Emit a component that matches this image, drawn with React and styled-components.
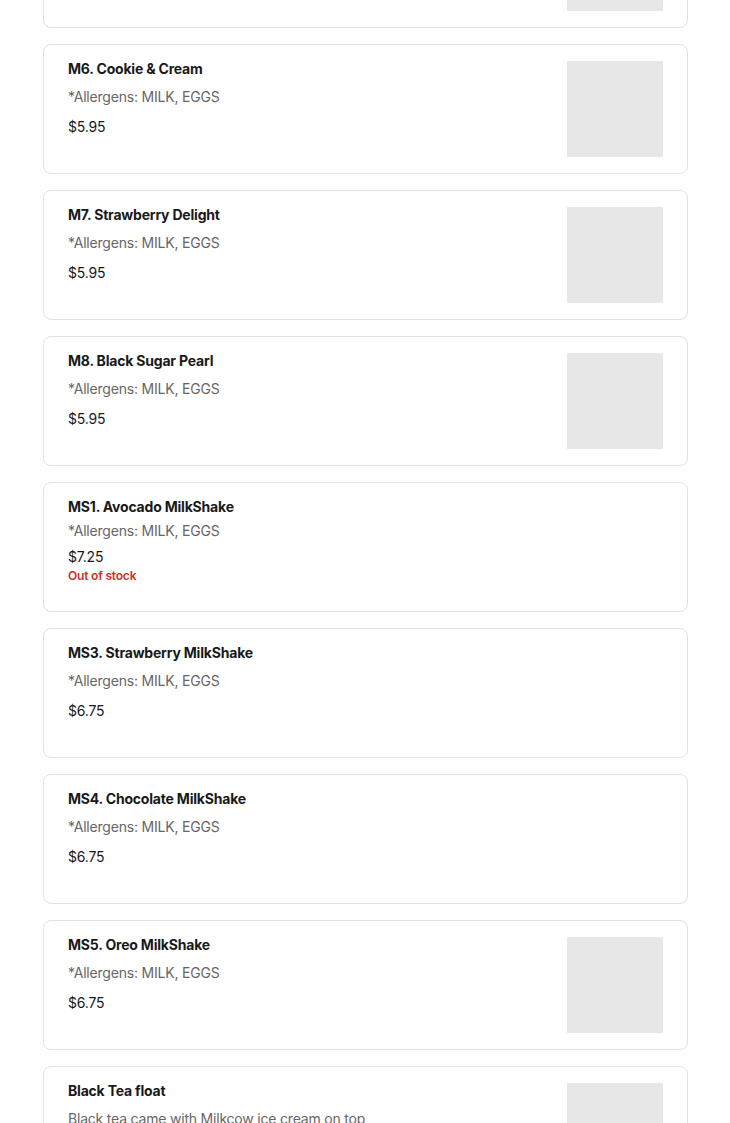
import React from "react";
import styled, { createGlobalStyle } from "styled-components";

const GlobalStyle = createGlobalStyle`
	html, body {
		margin: 0;
		padding: 0;
		background: #ffffff;
	}
	body {
		font-family: "Inter", "Liberation Sans", sans-serif;
		color: #191919;
		overflow: hidden;
	}
`;

const items = [
	{ name: "M5. Matcha Cream", desc: "*Allergens: MILK, EGGS", price: "$5.95", image: true },
	{ name: "M6. Cookie & Cream", desc: "*Allergens: MILK, EGGS", price: "$5.95", image: true },
	{ name: "M7. Strawberry Delight", desc: "*Allergens: MILK, EGGS", price: "$5.95", image: true },
	{ name: "M8. Black Sugar Pearl", desc: "*Allergens: MILK, EGGS", price: "$5.95", image: true },
	{ name: "MS1. Avocado MilkShake", desc: "*Allergens: MILK, EGGS", price: "$7.25", outOfStock: true },
	{ name: "MS3. Strawberry MilkShake", desc: "*Allergens: MILK, EGGS", price: "$6.75" },
	{ name: "MS4. Chocolate MilkShake", desc: "*Allergens: MILK, EGGS", price: "$6.75" },
	{ name: "MS5. Oreo MilkShake", desc: "*Allergens: MILK, EGGS", price: "$6.75", image: true },
	{ name: "Black Tea float", desc: "Black tea came with Milkcow ice cream on top", price: "$6.50", image: true },
];

const App = () => {
	return (
		<>
			<GlobalStyle />
			<MenuList>
				{items.map((item) => (
					<Card key={item.name}>
						<Info $compact={item.outOfStock}>
							<Title>{item.name}</Title>
							<Desc>{item.desc}</Desc>
							<Price>{item.price}</Price>
							{item.outOfStock && <Stock>Out of stock</Stock>}
						</Info>
						{item.image && <Thumb />}
					</Card>
				))}
			</MenuList>
		</>
	);
};

// list is scrolled: first card sits partly above the top edge
const MenuList = styled.main`
	display: flex;
	flex-direction: column;
	gap: 16px;
	width: 645px;
	margin: -102px 0 0 43px;
`;

const Card = styled.article`
	display: flex;
	justify-content: space-between;
	align-items: flex-start;
	min-height: 96px;
	padding: 16px 24px;
	border: 1px solid #e2e2e2;
	border-radius: 8px;
`;

const Info = styled.div`
	display: flex;
	flex-direction: column;
	gap: ${(p) => (p.$compact ? "6px" : "10px")};
	letter-spacing: -0.2px;
`;

const Title = styled.h3`
	margin: 0;
	font-size: 14px;
	line-height: 16px;
	font-weight: 700;
	color: #191919;
`;

const Desc = styled.p`
	margin: 0;
	font-size: 14px;
	line-height: 20px;
	color: #666666;
`;

const Price = styled.span`
	font-size: 14px;
	line-height: 20px;
	color: #191919;
`;

const Stock = styled.span`
	margin-top: -5px;
	font-size: 12px;
	line-height: 16px;
	font-weight: 600;
	color: #d22f27;
`;

const Thumb = styled.div`
	flex: none;
	width: 96px;
	height: 96px;
	background: #e7e7e7;
`;

export default App;
